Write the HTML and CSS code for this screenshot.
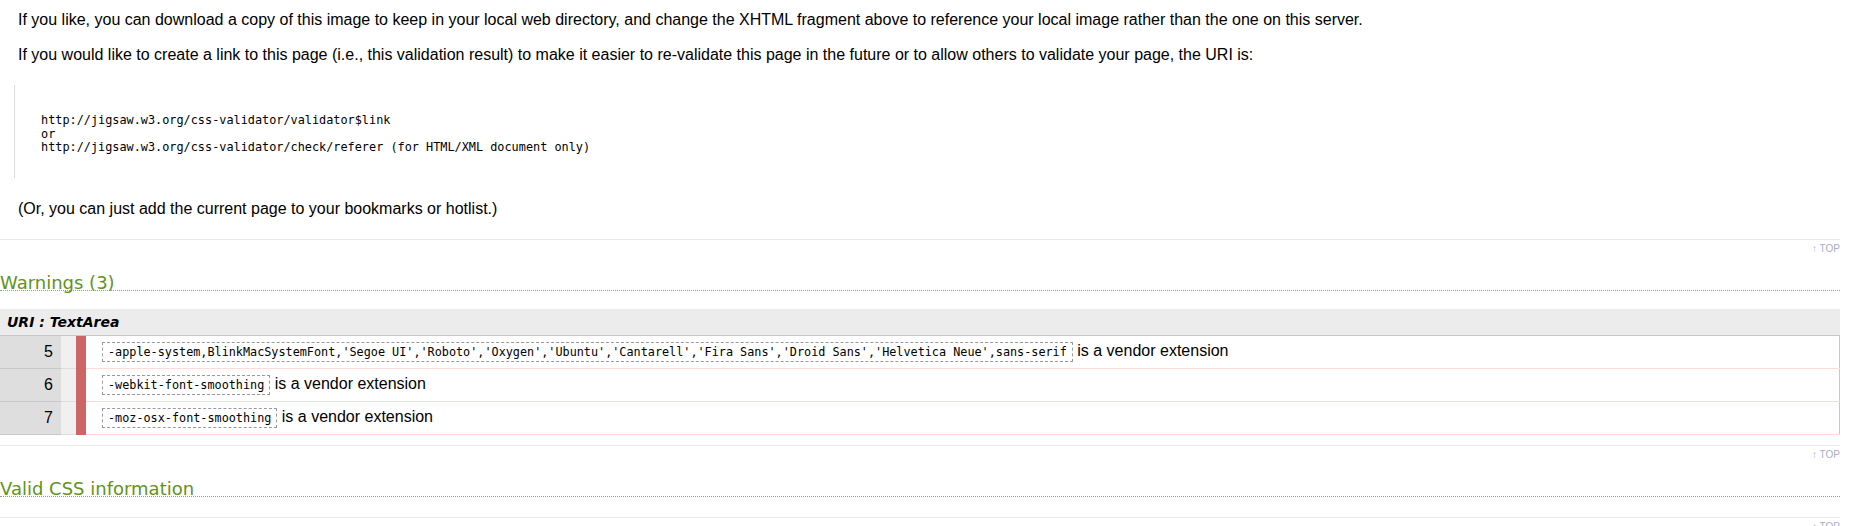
FILE: index.html
```html
<!DOCTYPE html>
<html lang="en">
<head>
<meta charset="utf-8">
<title>W3C CSS Validator results</title>
<link rel="stylesheet" href="styles.css">
</head>
<body>
<div class="page">
  <section class="section">
    <p class="text">If you like, you can download a copy of this image to keep in your local web directory, and change the XHTML fragment above to reference your local image rather than the one on this server.</p>
    <p class="text">If you would like to create a link to this page (i.e., this validation result) to make it easier to re-validate this page in the future or to allow others to validate your page, the URI is:</p>
    <pre class="uri">http://jigsaw.w3.org/css-validator/validator$link
or
http://jigsaw.w3.org/css-validator/check/referer (for HTML/XML document only)</pre>
    <p class="text text-last">(Or, you can just add the current page to your bookmarks or hotlist.)</p>
    <hr class="rule">
    <a class="top" href="#">↑ TOP</a>
  </section>

  <section class="section">
    <h3 class="heading">Warnings (3)</h3>
    <table class="results">
      <tr><th class="uri-head" colspan="4">URI : TextArea</th></tr>
      <tr class="row">
        <td class="num">5</td>
        <td class="ctx"></td>
        <td class="mark"></td>
        <td class="msg"><span class="code">-apple-system,BlinkMacSystemFont,'Segoe UI','Roboto','Oxygen','Ubuntu','Cantarell','Fira Sans','Droid Sans','Helvetica Neue',sans-serif</span> is a vendor extension</td>
      </tr>
      <tr class="row">
        <td class="num">6</td>
        <td class="ctx"></td>
        <td class="mark"></td>
        <td class="msg"><span class="code">-webkit-font-smoothing</span> is a vendor extension</td>
      </tr>
      <tr class="row">
        <td class="num">7</td>
        <td class="ctx"></td>
        <td class="mark"></td>
        <td class="msg"><span class="code">-moz-osx-font-smoothing</span> is a vendor extension</td>
      </tr>
    </table>
    <hr class="rule rule-table">
    <a class="top" href="#">↑ TOP</a>
  </section>

  <section class="section">
    <h3 class="heading">Valid CSS information</h3>
    <hr class="rule rule-empty">
    <a class="top" href="#">↑ TOP</a>
  </section>
</div>
</body>
</html>
```

FILE: styles.css
```css
html, body {
  margin: 0;
  padding: 0;
  background: #fff;
}

.page {
  width: 1840px;
  padding-top: 11px;
  display: flex;
  flex-direction: column;
}

.section {
  display: flex;
  flex-direction: column;
}

.text {
  margin: 0 0 17px 18px;
  font: 16px/18px "Liberation Sans", Arial, sans-serif;
  color: #000;
}

.text-last {
  margin-bottom: 0;
}

.uri {
  margin: 4px 0 22px 14px;
  border-left: 1px solid #dddddd;
  padding: 29px 0 23px 26px;
  font: 11.85px/13.5px "DejaVu Sans Mono", "Liberation Mono", monospace;
  color: #000;
}

.rule {
  margin: 21px 0 0;
  border: 0;
  height: 1px;
  background: #e9e9f3;
}

.rule-table {
  margin-top: 10px;
}

.rule-empty {
  margin-top: 20px;
}

.top {
  align-self: flex-end;
  margin-top: 3px;
  font: 10px/11px "Liberation Sans", Arial, sans-serif;
  color: #a9abc9;
  text-decoration: none;
}

.heading {
  margin: 22px 0 0;
  font: normal 18px/14px "DejaVu Sans", Verdana, sans-serif;
  color: #62931a;
  border-bottom: 1px dotted #9c9c7c;
}

.results {
  margin-top: 18px;
  width: 100%;
  border-collapse: collapse;
  border-spacing: 0;
}

.uri-head {
  height: 26px;
  padding: 0 0 0 7px;
  background: #ececec;
  border-bottom: 1px solid #c8c8c8;
  text-align: left;
  font: italic bold 14px/26px "DejaVu Sans", Verdana, sans-serif;
  color: #000;
}

.row td {
  height: 32px;
  padding: 0;
  border-bottom: 1px solid #ffdada;
}

.num {
  width: 53px;
  padding-right: 8px !important;
  background: #dedede;
  border-bottom-color: #c9c9c9 !important;
  text-align: right;
  font: 16px "Liberation Sans", Arial, sans-serif;
  color: #000;
}

.ctx {
  width: 15px;
  background: #f0f0f0;
  border-bottom-color: #dddddd !important;
}

.mark {
  width: 10px;
  background: #cc6565;
  border-bottom-color: #cc6565 !important;
}

.msg {
  padding-left: 16px !important;
  border-right: 1px solid #c8c8c8;
  font: 16px "Liberation Sans", Arial, sans-serif;
  color: #000;
  white-space: nowrap;
}

.code {
  display: inline-block;
  vertical-align: middle;
  height: 18px;
  padding: 0 5px;
  border: 1px dashed #999;
  font: 11.8px/18px "DejaVu Sans Mono", "Liberation Mono", monospace;
  color: #000;
}
```
